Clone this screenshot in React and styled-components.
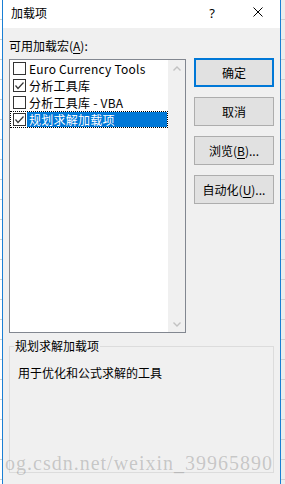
import React from 'react';
import styled, { createGlobalStyle } from 'styled-components';

const Global = createGlobalStyle`
  html, body { margin: 0; padding: 0; }
  body {
    width: 285px; height: 484px; overflow: hidden;
    font-family: "Noto Sans CJK SC", "Noto Sans", sans-serif;
    font-size: 12px; color: #000;
  }
`;

const Screen = styled.div`
  position: relative;
  display: flex;
  width: 285px;
  height: 484px;
  overflow: hidden;
`;

const SheetEdge = styled.div`
  flex: none;
  width: ${p => p.$w}px;
  background: repeating-linear-gradient(to bottom, ${p => p.$bg} 0 19px, #d0d0d0 19px 20px);
`;

const Dialog = styled.div`
  flex: none;
  width: 279px;
  box-sizing: border-box;
  border-left: 1px solid #1a7fd4;
  border-right: 1px solid #1a7fd4;
  background: #f0f0f0;
  display: flex;
  flex-direction: column;
`;

const TitleBar = styled.div`
  height: 28px;
  background: #fff;
  display: flex;
  align-items: center;
  padding-left: 8px;
`;

const Title = styled.div`
  flex: 1;
  line-height: 16px;
  margin-top: -2px;
`;

const HelpButton = styled.div`
  width: 24px;
  margin-right: 11px;
  text-align: center;
  font-family: "Noto Sans", sans-serif;
  font-size: 13px;
  line-height: 16px;
  margin-top: -3px;
`;

const CloseButton = styled.div`
  width: 45px;
  height: 28px;
  display: flex;
  align-items: center;
  justify-content: center;
  margin-top: -4px;
`;

const Body = styled.div`
  padding: 0 6px;
  display: flex;
  flex-direction: column;
`;

const FieldLabel = styled.div`
  margin-top: 10px;
  line-height: 16px;
`;

const Key = styled.span`
  text-decoration: underline;
  text-underline-offset: 2px;
`;

const MainRow = styled.div`
  margin-top: 4px;
  display: flex;
  gap: 8px;
`;

const ListBox = styled.div`
  margin-top: 1px;
  width: 177px;
  height: 274px;
  box-sizing: border-box;
  border: 1px solid #828790;
  background: #fff;
  display: flex;
`;

const Items = styled.div`
  flex: 1;
  display: flex;
  flex-direction: column;
`;

const Row = styled.div`
  height: 17px;
  display: flex;
  align-items: center;
  padding-left: 3px;
  outline: ${p => (p.$focused ? '1px dotted #000' : 'none')};
  outline-offset: -1px;
`;

const Box = styled.span`
  flex: none;
  width: 13px;
  height: 13px;
  box-sizing: border-box;
  border: 1px solid #333;
  background: #fff;
  display: flex;
  align-items: center;
  justify-content: center;
`;

const ItemText = styled.span`
  flex: 1;
  margin-left: 1px;
  margin-right: 1px;
  padding-left: 2px;
  height: 15px;
  line-height: 15px;
  white-space: nowrap;
  letter-spacing: 0.25px;
  background: ${p => (p.$selected ? '#0078d7' : 'transparent')};
  color: ${p => (p.$selected ? '#fff' : '#000')};
`;

const ScrollBar = styled.div`
  flex: none;
  width: 17px;
  background: #f0f0f0;
  display: flex;
  flex-direction: column;
  justify-content: space-between;
  align-items: center;
  padding: 6px 0 5px;
`;

const Buttons = styled.div`
  display: flex;
  flex-direction: column;
  gap: 10px;
`;

const Button = styled.div`
  width: 80px;
  height: 29px;
  box-sizing: border-box;
  border: ${p => (p.$default ? '2px solid #0078d7' : '1px solid #adadad')};
  background: #e1e1e1;
  display: flex;
  align-items: center;
  justify-content: center;
  line-height: 16px;
`;

const Group = styled.fieldset`
  margin: 5px 0 0;
  padding: 0;
  min-width: 0;
  height: 135px;
  box-sizing: border-box;
  border: 1px solid #dcdcdc;
`;

const Legend = styled.legend`
  margin-left: 4px;
  padding: 0 1px;
  line-height: 16px;
`;

const Description = styled.div`
  margin-top: 11px;
  padding-left: 8px;
  line-height: 16px;
`;

const Watermark = styled.div`
  position: absolute;
  left: 5px;
  top: 453px;
  font-family: "Liberation Serif", serif;
  font-size: 20px;
  line-height: 20px;
  letter-spacing: 1px;
  color: rgba(110, 110, 110, 0.32);
  white-space: nowrap;
  pointer-events: none;
`;

const Check = () => (
  <svg width="11" height="11" viewBox="0 0 11 11">
    <polyline points="1.5,5.5 4,8.5 9.5,2.5" fill="none" stroke="#333" strokeWidth="1.2" />
  </svg>
);

const Chevron = ({ up }) => (
  <svg width="8" height="5" viewBox="0 0 8 5">
    <polyline
      points={up ? '0.5,4.5 4,1 7.5,4.5' : '0.5,0.5 4,4 7.5,0.5'}
      fill="none"
      stroke="#c2c2c2"
      strokeWidth="1.4"
    />
  </svg>
);

const items = [
  { label: 'Euro Currency Tools', checked: false },
  { label: '分析工具库', checked: true },
  { label: '分析工具库 - VBA', checked: false },
  { label: '规划求解加载项', checked: true, selected: true },
];

export default function App() {
  return (
    <>
      <Global />
      <Screen>
        <SheetEdge $w={2} $bg="#ffffff" />
        <Dialog>
          <TitleBar>
            <Title>加载项</Title>
            <HelpButton>?</HelpButton>
            <CloseButton>
              <svg width="10" height="10" viewBox="0 0 10 10">
                <path d="M0.5 0.5 L9.5 9.5 M9.5 0.5 L0.5 9.5" stroke="#000" strokeWidth="1" />
              </svg>
            </CloseButton>
          </TitleBar>
          <Body>
            <FieldLabel>
              可用加载宏(<Key>A</Key>):
            </FieldLabel>
            <MainRow>
              <ListBox>
                <Items>
                  {items.map(it => (
                    <Row key={it.label} $focused={it.selected}>
                      <Box>{it.checked && <Check />}</Box>
                      <ItemText $selected={it.selected}>{it.label}</ItemText>
                    </Row>
                  ))}
                </Items>
                <ScrollBar>
                  <Chevron up />
                  <Chevron />
                </ScrollBar>
              </ListBox>
              <Buttons>
                <Button $default>确定</Button>
                <Button>取消</Button>
                <Button>
                  浏览(<Key>B</Key>)...
                </Button>
                <Button>
                  自动化(<Key>U</Key>)...
                </Button>
              </Buttons>
            </MainRow>
            <Group>
              <Legend>规划求解加载项</Legend>
              <Description>用于优化和公式求解的工具</Description>
            </Group>
          </Body>
        </Dialog>
        <SheetEdge $w={5} $bg="#ececec" />
        <Watermark>og.csdn.net/weixin_39965890</Watermark>
      </Screen>
    </>
  );
}
